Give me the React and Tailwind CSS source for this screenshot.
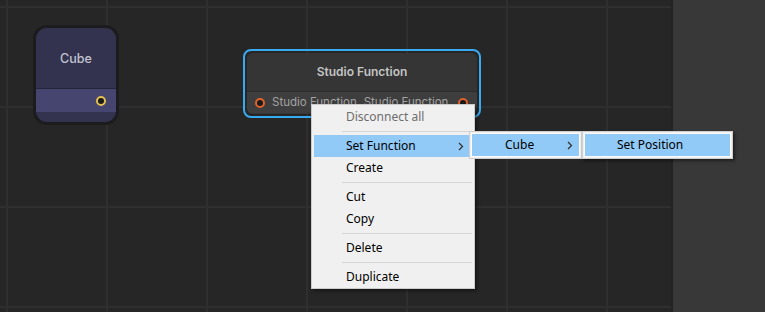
import React from "react";

const menuFont = { fontFamily: '"Noto Sans", "Open Sans", sans-serif' };

function Chevron() {
  return (
    <svg width="6" height="9" viewBox="0 0 6 9" className="shrink-0">
      <path d="M1 1l3.5 3.5L1 8" fill="none" stroke="#333" strokeWidth="1.3" />
    </svg>
  );
}

function Port({ ring }) {
  return <span className={`block shrink-0 w-[10px] h-[10px] rounded-full border-2 bg-[#1a1a1a] ${ring}`} />;
}

function Item({ label, active, disabled, sub }) {
  return (
    <div
      className={`h-[22px] flex items-center pl-[32px] pr-[6px] ml-[2px] mr-[4px] ${active ? "bg-[#91c9f7]" : ""} ${disabled ? "text-[#6d6d6d]" : "text-black"}`}
    >
      <span className="flex-1">{label}</span>
      {sub && <Chevron />}
    </div>
  );
}

function Sep() {
  return (
    <div className="h-[7px] flex items-center pl-[30px] pr-[2px]">
      <div className="h-px w-full bg-[#d5d5d5]" />
    </div>
  );
}

export default function App() {
  return (
    <div className="relative w-[765px] h-[312px] flex overflow-hidden bg-[#272727]" style={{ fontFamily: "Inter, Roboto, sans-serif" }}>
      {/* graph canvas */}
      <div className="relative flex-1 bg-[#262626] bg-[linear-gradient(to_right,#2f2f2f_2px,transparent_2px),linear-gradient(to_bottom,#2f2f2f_2px,transparent_2px)] bg-[size:100px_100px] bg-[position:6px_6px]">
        {/* Cube node */}
        <div className="absolute left-[33px] top-[25px] w-[86px] h-[100px] rounded-[14px] border-[3px] border-[#1c1c1f] bg-[#1c1c1f]">
          <div className="h-full rounded-[11px] overflow-hidden bg-[#33334f] flex flex-col">
            <div className="h-[60px] pt-[2px] flex items-center justify-center text-[12.5px] font-medium text-[#c3c3cf]">Cube</div>
            <div className="h-px bg-[#25253a]" />
            <div className="h-[23px] bg-[#45456f] flex items-center justify-end pr-[10px]">
              <Port ring="border-[#e4bf4f]" />
            </div>
          </div>
        </div>

        {/* Studio Function node (selected) */}
        <div className="absolute left-[243px] top-[49px] w-[238px] h-[69px] rounded-[8px] border-2 border-[#3aaaf0] p-[2px]">
          <div className="h-full rounded-[6px] overflow-hidden bg-[#353535] flex flex-col">
            <div className="h-[38px] flex items-center justify-center text-[12px] font-semibold text-[#c4c4c4]">Studio Function</div>
            <div className="h-[22px] bg-[#3e3e3e] border-t border-[#2c2c2c] flex items-center pl-[8px] pr-[9px] gap-[7px] text-[11.5px] text-[#a3a3a3] whitespace-nowrap">
              <Port ring="border-[#e0622c]" />
              <span className="flex-1">Studio Function</span>
              <span className="mr-[3px]">Studio Function</span>
              <Port ring="border-[#e0622c]" />
            </div>
          </div>
        </div>
      </div>

      {/* right side panel */}
      <div className="w-[94px] border-l-2 border-[#232323] bg-[#383838]" />

      {/* context menu */}
      <div className="absolute left-[311px] top-[104px] w-[164px] h-[185px] bg-[#f0f0f0] border border-[#cccccc] py-px shadow-[2px_2px_3px_rgba(0,0,0,0.45)] text-[12px]" style={menuFont}>
        <Item label="Disconnect all" disabled />
        <Sep />
        <Item label="Set Function" active sub />
        <Item label="Create" />
        <Sep />
        <Item label="Cut" />
        <Item label="Copy" />
        <Sep />
        <Item label="Delete" />
        <Sep />
        <Item label="Duplicate" />
      </div>

      {/* submenu: Cube */}
      <div className="absolute left-[469px] top-[131px] w-[113px] h-[28px] bg-[#f0f0f0] border border-[#cfcfcf] p-px text-[12px]" style={menuFont}>
        <div className="h-full bg-[#91c9f7] border border-[#fbfbfb] flex items-center pl-[33px] pr-[6px]">
          <span className="flex-1 text-black">Cube</span>
          <Chevron />
        </div>
      </div>

      {/* submenu: Set Position */}
      <div className="absolute left-[582px] top-[131px] w-[151px] h-[28px] bg-[#f0f0f0] border border-[#cfcfcf] p-px shadow-[2px_2px_3px_rgba(0,0,0,0.45)] text-[12px]" style={menuFont}>
        <div className="h-full bg-[#91c9f7] border border-[#fbfbfb] flex items-center pl-[32px] text-black">Set Position</div>
      </div>
    </div>
  );
}
